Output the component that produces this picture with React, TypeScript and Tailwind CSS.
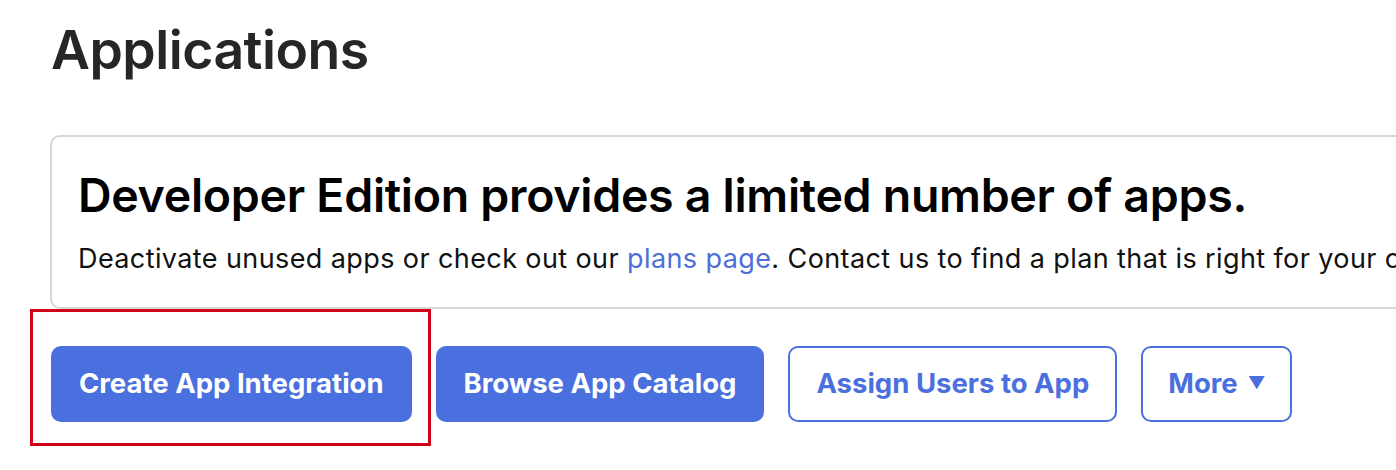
import React from 'react';

const font = { fontFamily: 'Inter, "Noto Sans", sans-serif' };

export default function App() {
  return (
    <div className="w-[1396px] h-[470px] overflow-hidden bg-white pl-[50px]" style={font}>
      <h1 className="pt-[17px] text-[53.5px] leading-[66px] font-semibold text-[#262626] tracking-[-0.5px] ml-[1px]">
        Applications
      </h1>

      <div className="mt-[52px] w-[1400px] h-[174px] border-2 border-[#d7d7d7] rounded-[10px] pl-[26px] pt-[26px]">
        <h2 className="text-[46.5px] leading-[64px] font-semibold text-black tracking-[-0.3px]">
          Developer Edition provides a limited number of apps.
        </h2>
        <p className="mt-[14px] text-[27px] leading-[36px] text-[#111] tracking-[0.4px] whitespace-nowrap">
          Deactivate unused apps or check out our <a className="text-[#4d6fd6]">plans page</a>. Contact us to find a plan that is right for your organization.
        </p>
      </div>

      <div className="flex items-center gap-[24px] mt-[37px] ml-[1px]">
        <div className="relative">
          <button className="h-[76px] px-[28px] rounded-[10px] bg-[#4a6fde] text-white text-[27.5px] font-bold">
            Create App Integration
          </button>
          <div className="absolute left-[-21px] top-[-37px] w-[401px] h-[137px] border-[3px] border-[#d0021b]" />
        </div>
        <button className="h-[76px] px-[28px] rounded-[10px] bg-[#4a6fde] text-white text-[27.5px] font-bold">
          Browse App Catalog
        </button>
        <button className="h-[76px] px-[26px] rounded-[10px] border-2 border-[#4a6fde] text-[#4a6fde] text-[27.5px] font-bold">
          Assign Users to App
        </button>
        <button className="h-[76px] px-[25px] rounded-[10px] border-2 border-[#4a6fde] text-[#4a6fde] text-[27.5px] font-bold flex items-center gap-[10px]">
          More
          <span className="text-[17px]">▼</span>
        </button>
      </div>
    </div>
  );
}
